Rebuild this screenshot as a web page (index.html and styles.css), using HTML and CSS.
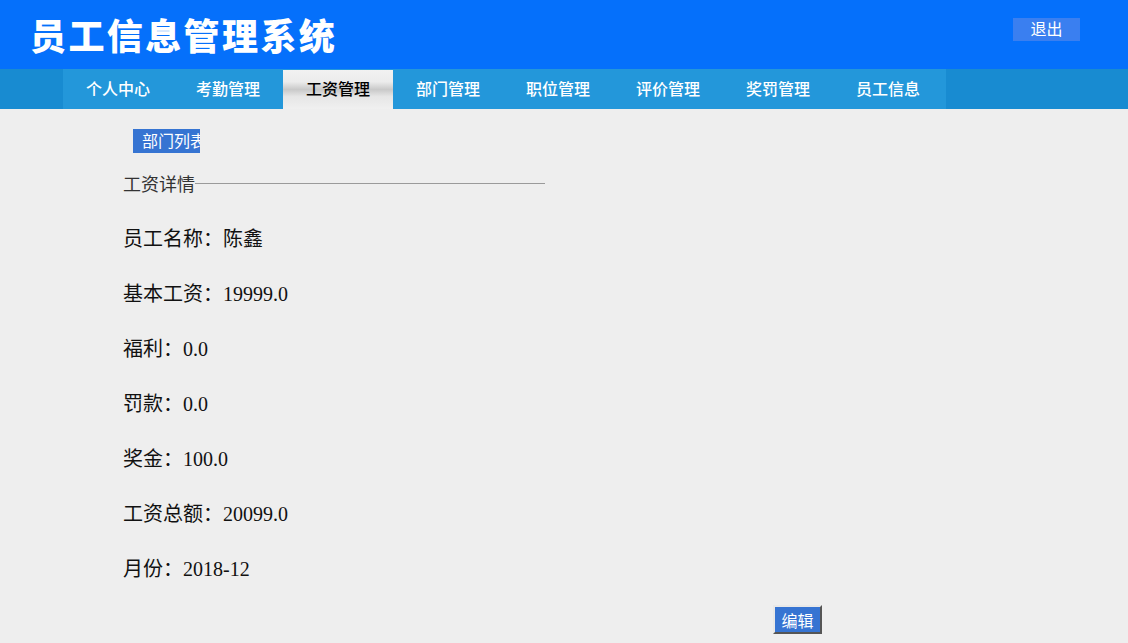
FILE: index.html
```html
<!DOCTYPE html>
<html lang="zh-CN">
<head>
<meta charset="utf-8">
<title>员工信息管理系统</title>
<link rel="stylesheet" href="styles.css">
</head>
<body>
<header class="top">
  <h1 class="logo">员工信息管理系统</h1>
  <a class="logout">退出</a>
</header>
<nav class="nav">
  <ul class="menu">
    <li class="menu-item">个人中心</li>
    <li class="menu-item">考勤管理</li>
    <li class="menu-item active">工资管理</li>
    <li class="menu-item">部门管理</li>
    <li class="menu-item">职位管理</li>
    <li class="menu-item">评价管理</li>
    <li class="menu-item">奖罚管理</li>
    <li class="menu-item">员工信息</li>
  </ul>
</nav>
<main class="content">
  <a class="list-btn">部门列表</a>
  <div class="section-title"><span class="section-text">工资详情</span><span class="section-line"></span></div>
  <div class="rows">
    <p class="row">员工名称：陈鑫</p>
    <p class="row">基本工资：19999.0</p>
    <p class="row">福利：0.0</p>
    <p class="row">罚款：0.0</p>
    <p class="row">奖金：100.0</p>
    <p class="row">工资总额：20099.0</p>
    <p class="row">月份：2018-12</p>
  </div>
  <button class="edit-btn">编辑</button>
</main>
</body>
</html>
```
FILE: styles.css
```css
* { box-sizing: border-box; }
html, body {
  margin: 0;
  padding: 0;
  background: #eeeeee;
  font-family: "Noto Sans CJK SC", "Noto Sans", sans-serif;
  overflow: hidden;
}
.top {
  height: 69px;
  background: #0570fb;
  display: flex;
  align-items: center;
  justify-content: space-between;
  padding: 0 48px 0 30px;
}
.logo {
  margin: 0;
  color: #ffffff;
  font-size: 36px;
  font-weight: 900;
  letter-spacing: 2.4px;
  line-height: 40px;
  margin-top: -2px;
}
.logout {
  width: 67px;
  height: 23px;
  background: #3a7ff0;
  color: #ffffff;
  font-size: 16px;
  line-height: 21px;
  text-align: center;
  margin-top: -10px;
}
.nav {
  height: 40px;
  background: #188bd1;
}
.menu {
  list-style: none;
  margin: 0 0 0 63px;
  padding: 0;
  width: 883px;
  height: 40px;
  background: #2397da;
  display: flex;
}
.menu-item {
  width: 110px;
  height: 40px;
  line-height: 39px;
  text-align: center;
  color: #ffffff;
  font-size: 16px;
  font-weight: 500;
}
.menu-item.active {
  color: #000000;
  margin-top: 1px;
  height: 39px;
  line-height: 37px;
  background: linear-gradient(#f2f2f2 0%, #ececec 30%, #c9c9c9 50%, #e6e6e6 68%, #f0f0f0 100%);
}
.content {
  padding: 20px 0 0 123px;
}
.list-btn {
  display: block;
  margin-left: 10px;
  width: 67px;
  height: 24px;
  overflow: hidden;
  white-space: nowrap;
  background: #3674d2;
  color: #ffffff;
  font-size: 16px;
  line-height: 22px;
  padding-left: 9px;
}
.section-title {
  display: flex;
  align-items: center;
  width: 422px;
  height: 22px;
  margin-top: 19px;
}
.section-text {
  color: #333333;
  font-size: 18px;
  line-height: 22px;
}
.section-line {
  flex: 1;
  height: 1px;
  background: #9a9a9a;
}
.rows {
  margin-top: 18px;
  display: flex;
  flex-direction: column;
}
.row {
  margin: 0;
  height: 55px;
  line-height: 55px;
  font-size: 20px;
  color: #111111;
  font-family: "Liberation Serif", "Noto Sans CJK SC", serif;
}
.edit-btn {
  display: block;
  margin: 8px 0 0 650px;
  width: 49px;
  height: 29px;
  padding: 0;
  background: #3674d2;
  color: #ffffff;
  font-size: 16px;
  font-family: "Noto Sans CJK SC", sans-serif;
  border: 2px solid;
  border-color: #e8e8e8 #555555 #555555 #e8e8e8;
}
```
